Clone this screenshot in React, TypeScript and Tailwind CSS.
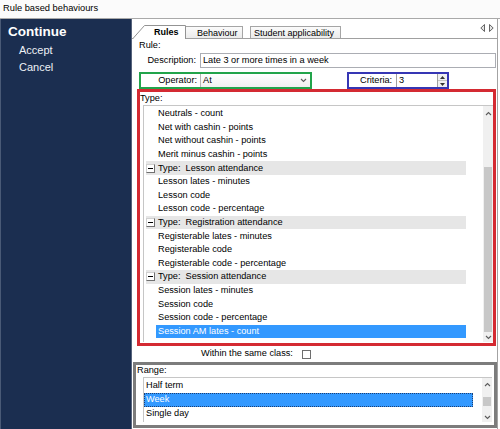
import React from 'react'

interface TypeRow {
  label: string
  header?: boolean
  selected?: boolean
}

const typeRows: TypeRow[] = [
  { label: 'Neutrals - count' },
  { label: 'Net with cashin - points' },
  { label: 'Net without cashin - points' },
  { label: 'Merit minus cashin - points' },
  { label: 'Type:  Lesson attendance', header: true },
  { label: 'Lesson lates - minutes' },
  { label: 'Lesson code' },
  { label: 'Lesson code - percentage' },
  { label: 'Type:  Registration attendance', header: true },
  { label: 'Registerable lates - minutes' },
  { label: 'Registerable code' },
  { label: 'Registerable code - percentage' },
  { label: 'Type:  Session attendance', header: true },
  { label: 'Session lates - minutes' },
  { label: 'Session code' },
  { label: 'Session code - percentage' },
  { label: 'Session AM lates - count', selected: true },
]

const ranges = ['Half term', 'Week', 'Single day']

function Chevron({ up }: { up?: boolean }) {
  return (
    <svg width="7" height="5" viewBox="0 0 7 5" className="block">
      <path
        d={up ? 'M1 4 L3.5 1.5 L6 4' : 'M1 1 L3.5 3.5 L6 1'}
        fill="none"
        stroke="#5c5c5c"
        strokeWidth="1.1"
      />
    </svg>
  )
}

function MinusBox() {
  return (
    <div className="w-[9px] h-[9px] shrink-0 bg-white border border-[#d0d0d0] border-r-[#707070] border-b-[#707070] flex items-center justify-center">
      <div className="w-[5px] h-px bg-black" />
    </div>
  )
}

export default function App() {
  return (
    <div className="w-[500px] h-[429px] overflow-hidden bg-white flex flex-col text-black text-[9.2px] leading-none font-['Liberation_Sans',Arial,sans-serif]">
      {/* window title */}
      <div className="h-[19px] shrink-0 flex items-center pl-[3px] bg-[#fbfbfb] border-b border-[#a9a9a9] text-[9.3px]">
        Rule based behaviours
      </div>

      <div className="flex flex-1 min-h-0">
        {/* left actions */}
        <aside className="w-[132px] shrink-0 bg-[#1b2e50] border-l border-[#4a5a76] border-r border-r-[#56637c] text-white">
          <div className="pl-[7px] pt-[5px] text-[13.5px] font-bold leading-[16px]">Continue</div>
          <div className="pl-[18px] mt-[2px] text-[11px] leading-[16.5px] text-[#eef1f6]">Accept</div>
          <div className="pl-[18px] text-[11px] leading-[16.5px] text-[#eef1f6]">Cancel</div>
        </aside>

        <main className="flex-1 min-w-0 flex flex-col mr-[2px] border-r border-[#a3a3a3]">
          {/* tabs */}
          <div className="h-[20px] shrink-0 flex items-end border-b border-[#a0a0a0] text-[9px]">
            <div className="relative w-[54px] h-[14px] -mb-px shrink-0">
              <svg width="54" height="14" viewBox="0 0 54 14" className="absolute inset-0">
                <path d="M0.5 14 L12.5 0.5 L53.5 0.5 L53.5 14" fill="#fff" stroke="#939393" />
              </svg>
              <span className="relative block pl-[22px] pt-[3px] font-bold">Rules</span>
            </div>
            <div className="w-[57px] h-[12px] shrink-0 border-t border-r border-[#a5a5a5] bg-gradient-to-b from-[#fbfbfb] to-[#ebebeb] pl-[11px] pt-[2px]">
              Behaviour
            </div>
            <div className="w-[7px] h-[12px] shrink-0" />
            <div className="w-[91px] h-[12px] shrink-0 border-t border-l border-r border-[#a5a5a5] bg-gradient-to-b from-[#fbfbfb] to-[#ebebeb] pl-[3px] pt-[2px]">
              Student applicability
            </div>
            <div className="ml-auto mr-[3px] mb-[6px] flex gap-[4px]">
              <svg width="5" height="8" viewBox="0 0 5 8">
                <path d="M4.5 0.5 L0.8 4 L4.5 7.5 Z" fill="#e4e4e4" stroke="#555" strokeWidth="0.9" />
              </svg>
              <svg width="5" height="8" viewBox="0 0 5 8">
                <path d="M0.5 0.5 L4.2 4 L0.5 7.5 Z" fill="#e4e4e4" stroke="#555" strokeWidth="0.9" />
              </svg>
            </div>
          </div>

          {/* rule */}
          <div className="h-[14px] shrink-0 flex items-center pl-[7px]">Rule:</div>
          <div className="h-[15px] shrink-0 flex items-center mr-[1px]">
            <div className="w-[64px] text-right">Description:</div>
            <div className="ml-[4px] flex-1 h-full border border-[#abadb3] flex items-center pl-[2px]">
              Late 3 or more times in a week
            </div>
          </div>

          <div className="mt-[4px] h-[17px] shrink-0 flex">
            <div className="ml-[7px] w-[173px] border-2 border-[#22a44b] flex items-center">
              <div className="flex-1 text-right pr-[3px]">Operator:</div>
              <div className="w-[110px] h-full border-l border-[#b4b4b4] bg-gradient-to-b from-[#ffffff] to-[#f0f0f0] flex items-center justify-between pl-[2px] pr-[3px]">
                <span>At</span>
                <Chevron />
              </div>
            </div>
            <div className="ml-[35px] w-[102px] border-2 border-[#3636b4] flex items-center">
              <div className="pl-[11px]">Criteria:</div>
              <div className="ml-auto w-[41px] h-full bg-white border-l border-[#a0a0a0] flex items-center pl-[2px]">3</div>
              <div className="w-[10px] h-full border-l border-[#a0a0a0] bg-[#f0f0f0] flex flex-col">
                <div className="flex-1 flex items-center justify-center border-b border-[#c4c4c4]">
                  <svg width="5" height="3" viewBox="0 0 5 3"><path d="M0 3 L2.5 0 L5 3 Z" fill="#333" /></svg>
                </div>
                <div className="flex-1 flex items-center justify-center">
                  <svg width="5" height="3" viewBox="0 0 5 3"><path d="M0 0 L2.5 3 L5 0 Z" fill="#333" /></svg>
                </div>
              </div>
            </div>
          </div>

          {/* type */}
          <div className="h-[257px] shrink-0 ml-[5px] mr-[1px] border-[3px] border-[#d42a32] flex flex-col">
            <div className="h-[13px] shrink-0 flex items-center">Type:</div>
            <div className="flex-1 min-h-0 ml-[3px] mb-[1px] border-l border-t border-[#c6c6c6] flex">
              <div className="flex-1 min-w-0 pt-[1px]">
                {typeRows.map((row) =>
                  row.header ? (
                    <div
                      key={row.label}
                      className="h-[13.6px] ml-[2px] w-[320px] bg-[#e6e6e6] flex items-center whitespace-pre"
                    >
                      <MinusBox />
                      <span className="ml-[3px]">{row.label}</span>
                    </div>
                  ) : (
                    <div
                      key={row.label}
                      className={
                        row.selected
                          ? 'h-[13.6px] ml-[12px] w-[310px] pl-[2px] flex items-center bg-[#3399ff] text-white'
                          : 'h-[13.6px] ml-[12px] w-[310px] pl-[2px] flex items-center'
                      }
                    >
                      {row.label}
                    </div>
                  )
                )}
              </div>
              <div className="w-[10px] shrink-0 bg-[#f0f0f0] flex flex-col items-center">
                <div className="h-[14px] flex items-center"><Chevron up /></div>
                <div className="h-[47px]" />
                <div className="w-[8px] h-[165px] bg-[#c8c8c8]" />
                <div className="flex-1 flex items-center"><Chevron /></div>
              </div>
            </div>
          </div>

          <div className="h-[16px] shrink-0 flex items-center pl-[69px]">
            <span>Within the same class:</span>
            <div className="ml-[9px] w-[9px] h-[9px] border border-[#6e6e6e] bg-white" />
          </div>

          {/* range */}
          <div className="h-[66px] shrink-0 ml-[1px] border-[3px] border-[#7c7c7c] flex flex-col">
            <div className="h-[12px] shrink-0 flex items-center pl-[1px]">Range:</div>
            <div className="h-[45px] shrink-0 ml-[7px] mr-[2px] border-l border-t border-[#c6c6c6] flex">
              <div className="flex-1 min-w-0 pt-[1px]">
                {ranges.map((r) => (
                  <div
                    key={r}
                    className={
                      r === 'Week'
                        ? 'h-[14px] w-[329px] pl-[2px] flex items-center bg-[#3399ff] text-white outline-1 outline-dotted outline-[#1d3f73] -outline-offset-1'
                        : 'h-[14px] w-[329px] pl-[2px] flex items-center'
                    }
                  >
                    {r}
                  </div>
                ))}
              </div>
              <div className="w-[10px] shrink-0 bg-[#f0f0f0] flex flex-col items-center">
                <div className="h-[13px] flex items-center"><Chevron up /></div>
                <div className="h-[6px]" />
                <div className="w-[8px] h-[9px] bg-[#c8c8c8]" />
                <div className="flex-1 flex items-end pb-[2px]"><Chevron /></div>
              </div>
            </div>
          </div>
        </main>
      </div>
    </div>
  )
}
